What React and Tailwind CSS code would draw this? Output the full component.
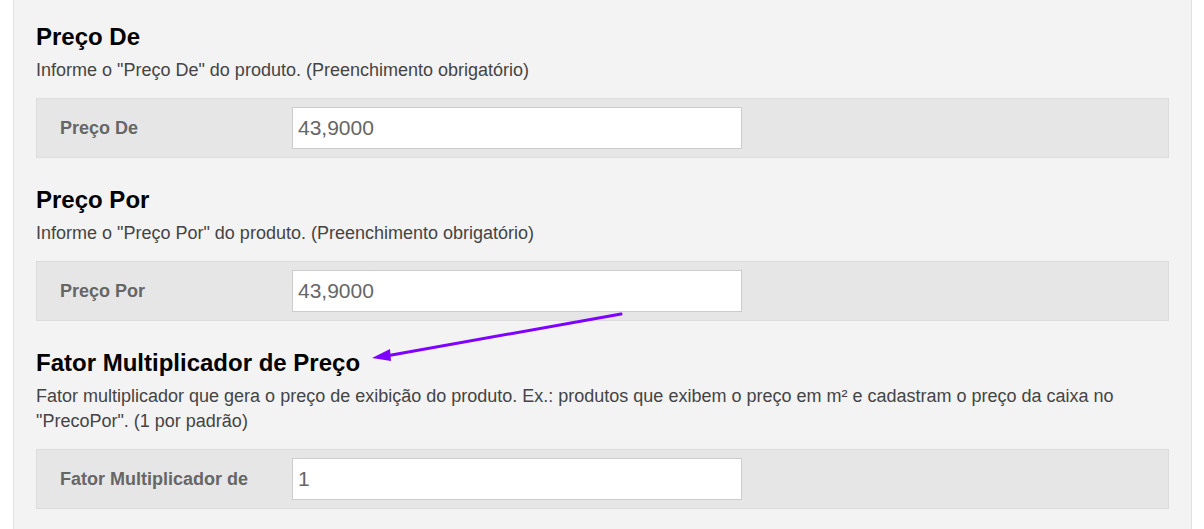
import React from "react";

const fields = [
	{
		title: "Preço De",
		desc: 'Informe o "Preço De" do produto. (Preenchimento obrigatório)',
		label: "Preço De",
		value: "43,9000",
	},
	{
		title: "Preço Por",
		desc: 'Informe o "Preço Por" do produto. (Preenchimento obrigatório)',
		label: "Preço Por",
		value: "43,9000",
	},
	{
		title: "Fator Multiplicador de Preço",
		desc: 'Fator multiplicador que gera o preço de exibição do produto. Ex.: produtos que exibem o preço em m² e cadastram o preço da caixa no "PrecoPor". (1 por padrão)',
		label: "Fator Multiplicador de",
		value: "1",
	},
];

function Field({ field }) {
	return (
		<section className="mb-[27px]">
			<h2 className="text-[24px] font-bold leading-[30px] text-black">
				{field.title}
			</h2>
			<p className="mt-[6px] text-[18px] leading-[25px] text-[#444]">
				{field.desc}
			</p>
			<div className="mt-[15px] flex h-[60px] items-center border border-[#dcdcdc] bg-[#e6e6e6]">
				<div className="w-[255px] shrink-0 pl-[23px] text-[18px] font-bold text-[#666]">
					{field.label}
				</div>
				<input
					readOnly
					value={field.value}
					className="h-[42px] w-[450px] border border-[#cccccc] bg-white px-[5px] text-[21px] text-[#666] outline-none"
				/>
			</div>
		</section>
	);
}

export default function App() {
	return (
		<div className="h-[529px] overflow-hidden bg-white font-['Liberation_Sans',Arial,sans-serif]">
			<div className="relative ml-[13px] h-full w-[1179px] border-x border-[#e2e2e2] bg-[#f3f3f3] px-[22px] pt-[22px]">
				{fields.map((f) => (
					<Field key={f.title} field={f} />
				))}
				{/* annotation arrow */}
				<svg
					className="pointer-events-none absolute left-0 top-0"
					width="1179"
					height="529"
				>
					<line
						x1="607"
						y1="314"
						x2="372"
						y2="356"
						stroke="#7f00ff"
						strokeWidth="3"
						strokeLinecap="round"
					/>
					<polygon points="358,358 376,349 377,361" fill="#7f00ff" />
				</svg>
			</div>
		</div>
	);
}
